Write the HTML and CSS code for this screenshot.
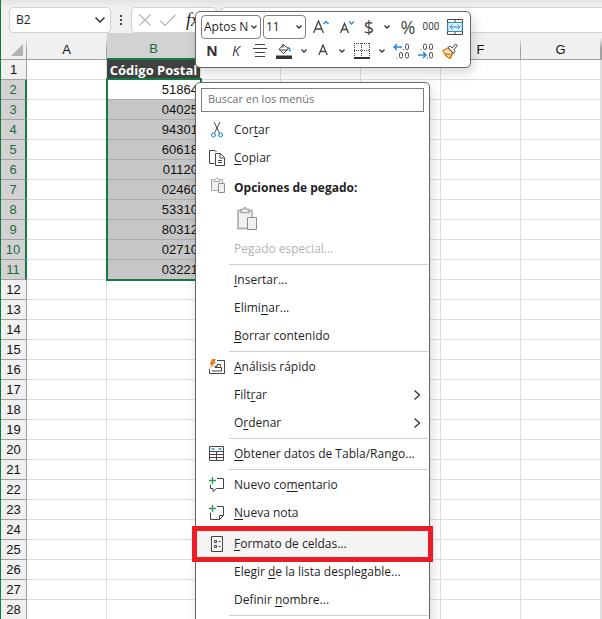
FILE: index.html
```
<!DOCTYPE html>
<html lang="es">
<head>
<meta charset="utf-8">
<title>Libro de cálculo</title>
<link rel="stylesheet" href="styles.css">
</head>
<body>
<div class="app">
  <header class="formula-bar">
    <label class="box name-box">
      <input class="name-input" value="B2" aria-label="Cuadro de nombres">
      <svg class="chev-lg" viewBox="0 0 10 6"><path d="M.5.5 5 5 9.500.5"/></svg>
    </label>
    <svg class="grip" viewBox="0 0 2 10"><path d="M0 0h2v2H0zM0 4h2v2H0zM0 8h2v2H0z"/></svg>
    <div class="box fx-box">
      <button class="fx-btn" aria-label="Cancelar"><svg class="fx-icon" viewBox="0 0 14 14"><path d="M1.500 1.500l11 11M12.500 1.500l-11 11"/></svg></button>
      <button class="fx-btn" aria-label="Introducir"><svg class="fx-icon wide" viewBox="0 0 16 14"><path d="M.5 8 5 12.500 15.500 2"/></svg></button>
      <button class="fx-btn fx-fn" aria-label="Insertar función"><i>fx</i></button>
    </div>
    <input class="box formula" aria-label="Barra de fórmulas">
  </header>

  <main class="sheet">
    <table class="grid">
      <colgroup><col class="c-row"><col class="c-std"><col class="c-b"><col class="c-std"><col class="c-std"><col class="c-std"><col class="c-std"><col class="c-std"><col></colgroup>
      <thead>
        <tr><th class="corner"><svg class="tri" viewBox="0 0 12 12"><path d="M12 0v12H0z"/></svg></th><th>A</th><th class="on">B</th><th></th><th></th><th></th><th>F</th><th>G</th><th></th></tr>
      </thead>
      <tbody>
        <tr><th>1</th><td></td><td class="title">Código Postal</td><td></td><td></td><td></td><td></td><td></td><td></td></tr>
        <tr class="sel"><th>2</th><td></td><td class="val active">51864</td><td></td><td></td><td></td><td></td><td></td><td></td></tr>
        <tr class="sel"><th>3</th><td></td><td class="val">04025</td><td></td><td></td><td></td><td></td><td></td><td></td></tr>
        <tr class="sel"><th>4</th><td></td><td class="val">94301</td><td></td><td></td><td></td><td></td><td></td><td></td></tr>
        <tr class="sel"><th>5</th><td></td><td class="val">60618</td><td></td><td></td><td></td><td></td><td></td><td></td></tr>
        <tr class="sel"><th>6</th><td></td><td class="val">01120</td><td></td><td></td><td></td><td></td><td></td><td></td></tr>
        <tr class="sel"><th>7</th><td></td><td class="val">02460</td><td></td><td></td><td></td><td></td><td></td><td></td></tr>
        <tr class="sel"><th>8</th><td></td><td class="val">53310</td><td></td><td></td><td></td><td></td><td></td><td></td></tr>
        <tr class="sel"><th>9</th><td></td><td class="val">80312</td><td></td><td></td><td></td><td></td><td></td><td></td></tr>
        <tr class="sel"><th>10</th><td></td><td class="val">02710</td><td></td><td></td><td></td><td></td><td></td><td></td></tr>
        <tr class="sel"><th>11</th><td></td><td class="val">03221</td><td></td><td></td><td></td><td></td><td></td><td></td></tr>
        <tr><th>12</th><td></td><td></td><td></td><td></td><td></td><td></td><td></td><td></td></tr>
        <tr><th>13</th><td></td><td></td><td></td><td></td><td></td><td></td><td></td><td></td></tr>
        <tr><th>14</th><td></td><td></td><td></td><td></td><td></td><td></td><td></td><td></td></tr>
        <tr><th>15</th><td></td><td></td><td></td><td></td><td></td><td></td><td></td><td></td></tr>
        <tr><th>16</th><td></td><td></td><td></td><td></td><td></td><td></td><td></td><td></td></tr>
        <tr><th>17</th><td></td><td></td><td></td><td></td><td></td><td></td><td></td><td></td></tr>
        <tr><th>18</th><td></td><td></td><td></td><td></td><td></td><td></td><td></td><td></td></tr>
        <tr><th>19</th><td></td><td></td><td></td><td></td><td></td><td></td><td></td><td></td></tr>
        <tr><th>20</th><td></td><td></td><td></td><td></td><td></td><td></td><td></td><td></td></tr>
        <tr><th>21</th><td></td><td></td><td></td><td></td><td></td><td></td><td></td><td></td></tr>
        <tr><th>22</th><td></td><td></td><td></td><td></td><td></td><td></td><td></td><td></td></tr>
        <tr><th>23</th><td></td><td></td><td></td><td></td><td></td><td></td><td></td><td></td></tr>
        <tr><th>24</th><td></td><td></td><td></td><td></td><td></td><td></td><td></td><td></td></tr>
        <tr><th>25</th><td></td><td></td><td></td><td></td><td></td><td></td><td></td><td></td></tr>
        <tr><th>26</th><td></td><td></td><td></td><td></td><td></td><td></td><td></td><td></td></tr>
        <tr><th>27</th><td></td><td></td><td></td><td></td><td></td><td></td><td></td><td></td></tr>
        <tr><th>28</th><td></td><td></td><td></td><td></td><td></td><td></td><td></td><td></td></tr>
      </tbody>
    </table>
    <div class="selection"></div>
  </main>

  <div class="mini">
    <div class="mini-row">
      <span class="pick pick-font"><select aria-label="Fuente"><option>Aptos Narrow</option></select><svg class="chev" viewBox="0 0 6 4"><path d="M.5.5 3 3 5.500.5"/></svg></span>
      <span class="pick pick-size"><select aria-label="Tamaño"><option>11</option></select><svg class="chev" viewBox="0 0 6 4"><path d="M.5.5 3 3 5.500.5"/></svg></span>
      <button class="tool w26" aria-label="Aumentar tamaño"><svg width="18" height="18" viewBox="0 0 18 18"><path class="ink heavy" d="M1.500 15 6.500 3 11.500 15M3.200 11h6.600"/><path class="blue heavy" d="M11.500 6 14 3.500 16.500 6"/></svg></button>
      <button class="tool w26" aria-label="Reducir tamaño"><svg width="18" height="18" viewBox="0 0 18 18"><path class="ink heavy" d="M2.500 15 6.500 5.500 10.500 15M4 11.500h5"/><path class="blue heavy" d="M11 3.500 13.500 6 16 3.500"/></svg></button>
      <button class="tool w18 glyph" aria-label="Moneda">$</button>
      <button class="tool w18" aria-label="Más formatos"><svg class="chev" viewBox="0 0 6 4"><path d="M.5.5 3 3 5.500.5"/></svg></button>
      <button class="tool w24 glyph" aria-label="Porcentaje">%</button>
      <button class="tool w22 thousands" aria-label="Millares">000</button>
      <button class="tool w26" aria-label="Combinar y centrar"><svg width="16" height="16" viewBox="0 0 16 16"><path class="ink" d="M.5.5h15v15H.5zM8 .5v3M8 12.500v3"/><path class="blue fillsky" d="M.8 3.500h14.400v9H.8z"/><path class="blue" d="M3 8h10M5.500 5.500 3 8l2.500 2.500M10.500 5.500 13 8l-2.500 2.500"/></svg></button>
    </div>
    <div class="mini-row">
      <button class="tool w22 bold" aria-label="Negrita">N</button>
      <button class="tool w26 ital" aria-label="Cursiva">K</button>
      <button class="tool w22" aria-label="Centrar"><svg width="14" height="14" viewBox="0 0 14 14"><path class="ink" d="M2 .5h10M0 4.500h14M2 8.500h10M2 12.500h10"/></svg></button>
      <button class="tool w26" aria-label="Color de relleno"><svg width="16" height="16" viewBox="0 0 16 16"><path class="ink" d="M7.500 1 3 6.500 7.500 10.500 12.500 5.500 7 1.500V5M3.500 7h8"/><path class="blue thick" d="M11.500 4.500c2 .5 2.500 1.500 2.500 4"/><path class="solid" d="M0 12.500h16v3.500H0z"/></svg></button>
      <button class="tool w14" aria-label="Más rellenos"><svg class="chev" viewBox="0 0 6 4"><path d="M.5.5 3 3 5.500.5"/></svg></button>
      <button class="tool w24" aria-label="Color de fuente"><svg width="10" height="14" viewBox="0 0 10 14"><path class="ink heavy" d="M.8 11 5 1 9.200 11M2.300 7.500h5.400"/></svg></button>
      <button class="tool w14" aria-label="Más colores"><svg class="chev" viewBox="0 0 6 4"><path d="M.5.5 3 3 5.500.5"/></svg></button>
      <button class="tool w26" aria-label="Bordes"><svg width="16" height="16" viewBox="0 0 16 16"><path class="dots" d="M0 .5h16M.5 0v14M15.500 0v14M7.500 0v14M0 7.500h16"/><path class="solid" d="M0 14h16v2H0z"/></svg></button>
      <button class="tool w14" aria-label="Más bordes"><svg class="chev" viewBox="0 0 6 4"><path d="M.5.5 3 3 5.500.5"/></svg></button>
      <button class="tool w26" aria-label="Aumentar decimales"><svg width="18" height="16" viewBox="0 0 18 16"><path class="blue thick" d="M1 4h8M4 1 1 4l3 3"/><g class="num"><rect x="12.500" y="1" width="3" height="5.500" rx="1.500"/><rect x="6.500" y="9.500" width="3" height="5.500" rx="1.500"/><rect x="12.500" y="9.500" width="3" height="5.500" rx="1.500"/><path d="M10.500 6v1M4 14.500v1"/></g></svg></button>
      <button class="tool w22" aria-label="Disminuir decimales"><svg width="18" height="16" viewBox="0 0 18 16"><path class="blue thick" d="M1 12h8M6 9l3 3-3 3"/><g class="num"><rect x="6.500" y="1" width="3" height="5.500" rx="1.500"/><rect x="12.500" y="1" width="3" height="5.500" rx="1.500"/><rect x="12.500" y="9.500" width="3" height="5.500" rx="1.500"/><path d="M4 6v1M10.500 14.500v1"/></g></svg></button>
      <button class="tool w26" aria-label="Copiar formato"><svg width="16" height="16" viewBox="0 0 16 16"><path class="brush" d="M1 7.500 6 5l5 5-3 5.500Q3 13 1 7.500z"/><path class="brushlow" d="M3 11l5 .5M8 15.500 10 10"/><path class="ink white" d="M6 4.500 8 3l2.200 2 3.300-4 2 1.500-3.500 4L13 8.500 11.500 10.500z"/></svg></button>
    </div>
  </div>

  <div class="menu">
    <input class="search" placeholder="Buscar en los menús" aria-label="Buscar en los menús">
    <button class="item"><svg class="ic" viewBox="0 0 16 16"><path class="ink" d="M5 0 10.500 11M11 0 5.500 11"/><circle class="blue fillsky" cx="4.500" cy="13" r="2"/><circle class="blue fillsky" cx="11.500" cy="13" r="2"/></svg><span>Cor<u>t</u>ar</span></button>
    <button class="item"><svg class="ic" viewBox="0 0 16 16"><path class="ink" d="M5.500 13.500H.5v-13H6l1.500 1.500M6.500 3.500h5l4 4v8h-9zM11 3.500V8h4.500M9 10.500h4M9 12.500h4"/></svg><span><u>C</u>opiar</span></button>
    <div class="item head"><svg class="ic" viewBox="0 0 16 16"><path class="paste" d="M4.500 2.500h-2v11h11v-11h-2M5 4.500v-2h1.500Q8-1 9.500 2.500H11v2z"/><path class="paste over" d="M9.500 6.500h6v9h-6z"/></svg><b>Opciones de pegado:</b></div>
    <button class="paste-opt" aria-label="Pegar"><svg width="22" height="24" viewBox="0 0 22 24"><path class="paste thick" d="M5 3.500H2v18h14v-18h-3M5 5.500v-3h2Q9-1 11 2.500h2v3z"/><path class="paste over" d="M11.500 10.500h9v12h-9z"/></svg></button>
    <button class="item" disabled><span class="ic"></span><span>Pegado especial...</span></button>
    <hr>
    <button class="item"><span class="ic"></span><span><u>I</u>nsertar...</span></button>
    <button class="item"><span class="ic"></span><span>Elimi<u>n</u>ar...</span></button>
    <button class="item"><span class="ic"></span><span><u>B</u>orrar contenido</span></button>
    <hr>
    <button class="item"><svg class="ic" viewBox="0 0 16 16"><path class="ink" d="M8 1.500h7.500v13H.5V10M5.500 7.500H8v-2h3.500v2M3 12h9.500V8.500H6"/><path class="bolt" d="M3 0h4L5.500 3H7L1 9.500 2.500 5.500H.5z"/></svg><span><u>A</u>nálisis rápido</span></button>
    <button class="item"><span class="ic"></span><span>Filt<u>r</u>ar</span><svg class="more" viewBox="0 0 6 10"><path d="M.5.5 5.500 5 .5 9.500"/></svg></button>
    <button class="item"><span class="ic"></span><span>O<u>r</u>denar</span><svg class="more" viewBox="0 0 6 10"><path d="M.5.5 5.500 5 .5 9.500"/></svg></button>
    <hr>
    <button class="item"><svg class="ic" viewBox="0 0 16 16"><path class="ink" d="M.5.5h14v14H.5zM.5 5.500h14M.5 8.500h14M.5 11.500h14M7.500 5.500v9"/><path class="blue thick" d="M2.500 3h3M9.500 3h3"/></svg><span><u>O</u>btener datos de Tabla/Rango...</span></button>
    <hr>
    <button class="item"><svg class="ic" viewBox="0 0 16 16"><path class="ink" d="M8 1.500h6.500v10h-7L4 14.500v-3H1.500V7.500"/><path class="plus" d="M3.500 0v7M0 3.500h7"/></svg><span>Nuevo co<u>m</u>entario</span></button>
    <button class="item"><svg class="ic" viewBox="0 0 16 16"><path class="ink" d="M8 1.500h6.500v9l-4 4h-9V7.500M14.500 10.500h-4v4"/><path class="plus" d="M3.500 0v7M0 3.500h7"/></svg><span><u>N</u>ueva nota</span></button>
    <hr>
    <button class="item hot"><svg class="ic" viewBox="0 0 16 16"><path class="ink" d="M2.500.5h11v15h-11zM5.500 4.500h2v2h-2zM5.500 9.500h2v2h-2zM9.500 5.500h2M9.500 10.500h2"/></svg><span><u>F</u>ormato de celdas...</span></button>
    <button class="item"><span class="ic"></span><span>Elegir <u>d</u>e la lista desplegable...</span></button>
    <button class="item"><span class="ic"></span><span>Definir <u>n</u>ombre...</span></button>
    <hr>
  </div>
</div>
</body>
</html>
```
FILE: styles.css
```
* { box-sizing: border-box; }

body {
  margin: 0;
  font: 12px/16px "Open Sans", sans-serif;
  color: #1f1f1f;
}

button, input, select {
  font: inherit;
  color: inherit;
  margin: 0;
  padding: 0;
  border: 0;
  background: none;
  outline: 0;
}

svg { display: block; fill: none; flex: none; }

.app {
  position: relative;
  height: 100vh;
  overflow: hidden;
  background: #f0f0f0;
  border-left: 1px solid #107c41;
}

/* Formula bar */
.formula-bar {
  display: flex;
  align-items: center;
  height: 33px;
  padding: 7px 0 0 8px;
  background: linear-gradient(#e3e3e3, #f0f0f0 7px);
}

.box {
  height: 26px;
  background: #fff;
  border: 1px solid #d2d2d2;
  border-radius: 4px;
}

.name-box {
  display: flex;
  align-items: center;
  width: 102px;
  padding: 0 5px 0 6px;
}

.name-input { flex: 1; min-width: 0; }
.chev-lg { width: 10px; height: 6px; stroke: #333; stroke-width: 1.500; }
.grip { width: 2px; height: 10px; margin: 0 9px; fill: #444; }

.fx-box {
  display: flex;
  align-items: center;
  gap: 8px;
  width: 86px;
  padding: 0 6px;
}

.fx-icon { width: 14px; height: 14px; stroke: #b5b5b5; stroke-width: 1.200; }
.fx-icon.wide { width: 16px; }
.fx-fn { font: 18px/20px "Liberation Serif", serif; padding-left: 2px; }

.formula {
  flex: 1;
  min-width: 0;
  margin-left: 4px;
  border-right: 0;
  border-radius: 4px 0 0 4px;
}

/* Sheet */
.sheet { position: relative; background: #fff; }

.grid {
  width: 100%;
  table-layout: fixed;
  border-collapse: separate;
  border-spacing: 0;
  font: 13px/18px "Liberation Sans", sans-serif;
  color: #111;
}

.c-row { width: 26px; }
.c-std { width: 80px; }
.c-b { width: 94px; }

.grid th, .grid td {
  height: 20px;
  padding: 0;
  border-right: 1px solid #dedede;
  border-bottom: 1px solid #dedede;
  white-space: nowrap;
}

.grid th { font-weight: 400; background: #f0f0f0; border-color: #a0a0a0; }

.grid thead th {
  height: 27px;
  padding-top: 7px;
  border-right: 1px solid;
  border-image: linear-gradient(#f0f0f0 20%, #a0a0a0 60%) 1;
}

.grid thead .on {
  color: #1e6b41;
  background: #d2d2d2;
  border-bottom: 2px solid #107c41;
  border-right: 1px solid #a0a0a0;
  border-image: none;
}

.tri { width: 12px; height: 12px; margin-left: 10px; fill: #b2b2b2; }

.sel th {
  color: #1e6b41;
  background: #d2d2d2;
  border-right: 2px solid #107c41;
}

.grid .title {
  font: bold 13px/18px "Open Sans", sans-serif;
  text-align: center;
  color: #fff;
  background: #404040;
}

.grid .val {
  padding-right: 2px;
  text-align: right;
  background: #c6c6c6;
  border-color: #adadad;
}

.grid .active { background: #fff; }

.selection {
  position: absolute;
  left: 105px;
  top: 45px;
  width: 96px;
  height: 203px;
  border: 2px solid #107c41;
}

/* Floating format toolbar */
.mini, .menu {
  position: absolute;
  left: 194px;
  background: #fff;
  border: 1px solid #666;
  border-radius: 5px;
  box-shadow: 2px 5px 12px rgba(0, 0, 0, .16);
}

.mini { top: 11px; width: 276px; height: 57px; padding: 3px 2px 0 5px; }
.mini-row { display: flex; align-items: center; height: 24px; }

.pick {
  display: flex;
  align-items: center;
  gap: 3px;
  height: 24px;
  margin-right: 2px;
  padding: 0 3px 0 2px;
  border: 1px solid #808080;
  border-radius: 4px;
}

.pick-font { width: 60px; }
.pick-size { width: 45px; }
.pick select { flex: 1; min-width: 0; appearance: none; }

.chev { width: 6px; height: 4px; stroke: #333; stroke-width: 1.300; }
.tool { display: flex; align-items: center; justify-content: center; height: 24px; color: #444; flex: none; }
.w14 { width: 14px; }
.w18 { width: 18px; }
.w22 { width: 22px; }
.w24 { width: 24px; }
.w26 { width: 26px; }
.glyph { font-size: 18px; }
.thousands { font: 10px/16px Roboto, sans-serif; }
.bold { font-weight: 700; font-size: 14px; color: #333; }
.ital { font-style: italic; font-size: 14px; }

.ink { stroke: #444; }
.blue { stroke: #2b88d8; }
.heavy { stroke-width: 1.300; }
.thick { stroke-width: 1.500; }
.fillsky { fill: #e3f1fb; }
.white { fill: #fff; }
.solid { fill: #333; }
.dots { stroke: #444; stroke-dasharray: 1 1; }
.num { stroke: #555; }
.brush { stroke: #e07a10; fill: #fbe3c8; stroke-width: 1.300; }
.brushlow { stroke: #e07a10; stroke-width: 1.500; }
.bolt { fill: #e8801c; }
.plus { stroke: #2b9a55; stroke-width: 1.300; }
.paste { stroke: #a6a6a6; fill: #f0f0f0; }
.over { stroke: #8c8c8c; }

/* Context menu */
.menu {
  top: 82px;
  display: flex;
  flex-direction: column;
  width: 235px;
  padding: 5px 1px 10px;
}

.search {
  height: 24px;
  margin: 0 4px 4px;
  padding: 0 6px 4px;
  border: 1px solid #808080;
  font-size: 11px;
}

.search::placeholder { color: #707070; opacity: 1; }

.item {
  position: relative;
  display: flex;
  align-items: center;
  gap: 9px;
  height: 28px;
  padding: 0 8px 0 12px;
  text-align: left;
  white-space: nowrap;
}

.item u { text-underline-offset: 2px; }
.item:disabled { color: #b4b4b4; }
.ic { width: 16px; height: 16px; flex: none; }
.more { width: 6px; height: 10px; margin-left: auto; stroke: #333; stroke-width: 1.300; }
.head { margin-top: 2px; }
.head .ic { align-self: flex-start; margin-top: 3px; }
.paste-opt { height: 33px; padding: 0 0 0 39px; }

.menu hr {
  width: calc(100% - 32px);
  height: 1px;
  margin: 1px 0 1px auto;
  border: 0;
  background: #d0d0d0;
}

.hot { background: #f4f4f4; }

.hot::after {
  content: "";
  position: absolute;
  inset: -4px -5px;
  border: 5px solid #ed1c24;
}
```
